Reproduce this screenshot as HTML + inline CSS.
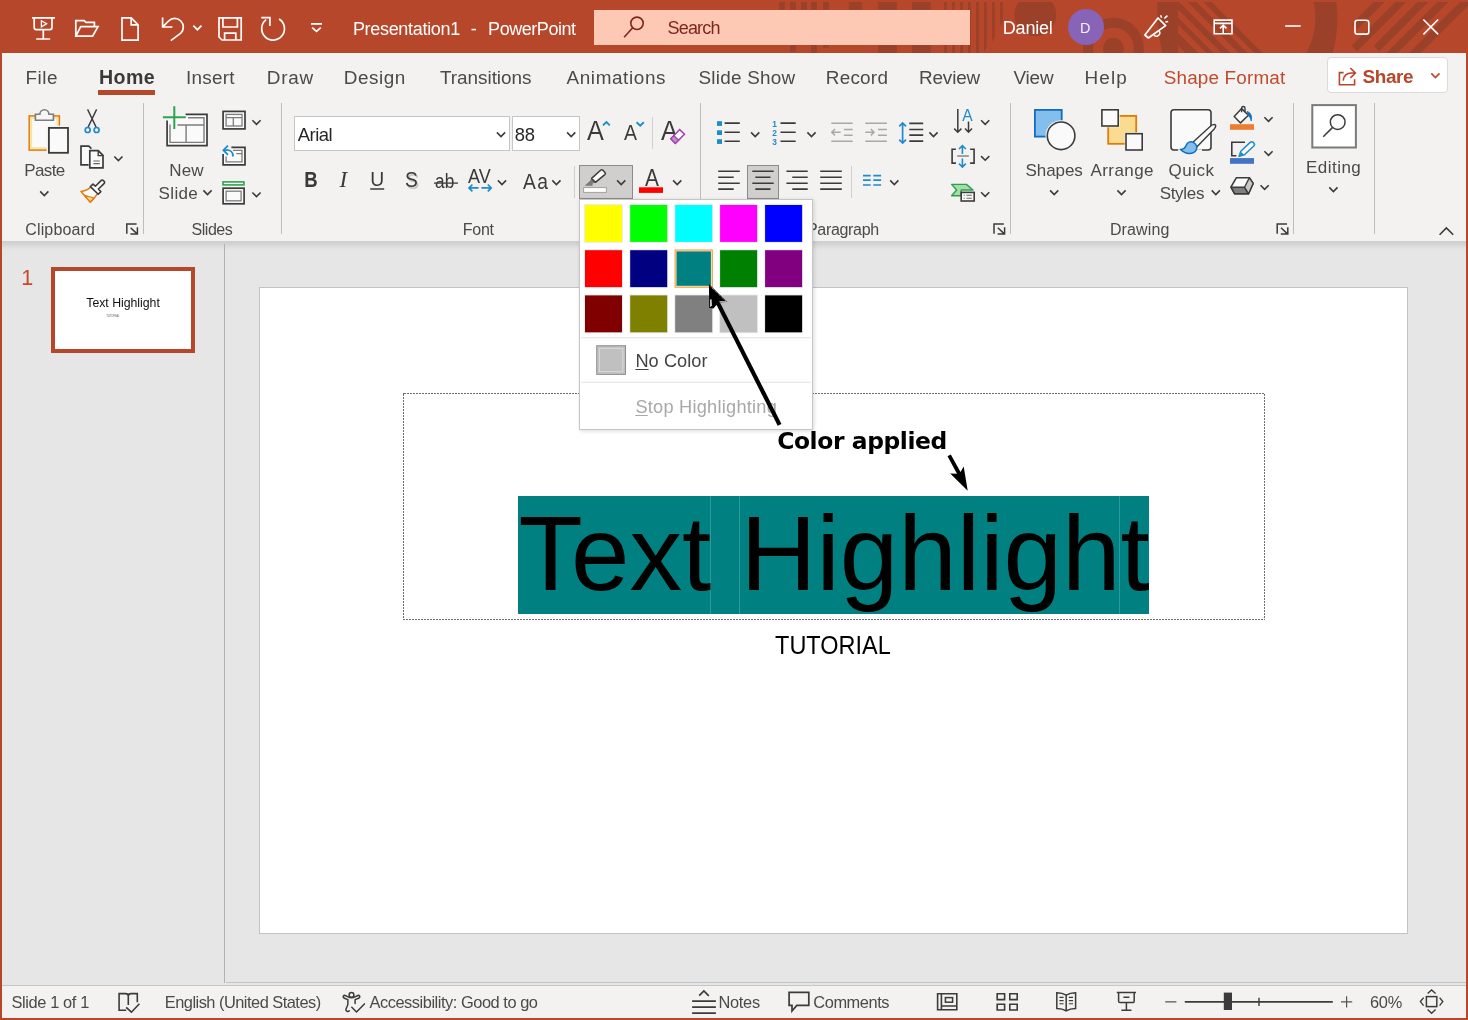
<!DOCTYPE html>
<html lang="en">
<head>
<meta charset="utf-8">
<title>Presentation1 - PowerPoint</title>
<style>
html,body{margin:0;padding:0;background:#e6e6e6;}
body{width:1468px;height:1020px;overflow:hidden;font-family:"Liberation Sans",sans-serif;}
#app{position:relative;width:1468px;height:1020px;overflow:hidden;background:#e6e6e6;}
#app div,#app span,#app svg{position:absolute;box-sizing:border-box;}
.t{white-space:pre;}
#labels,#labels2{left:0;top:0;width:1468px;height:1020px;will-change:transform;}
.t u{text-decoration-thickness:1px;text-underline-offset:2px;}
#titlebar{left:0;top:0;width:1468px;height:53px;background:#b7472a;}
#search{left:594px;top:10px;width:376px;height:35px;background:#fdc9b5;}
#ribbon{left:2px;top:53px;width:1464px;height:188px;background:#f3f2f1;}
#rshadow{left:2px;top:241px;width:1464px;height:9px;background:linear-gradient(#cecece,#d3d3d3 30%,#dddddd 62%,#e6e6e6);}
#bl{left:0;top:53px;width:2px;height:967px;background:#b7472a;}
#br{left:1466px;top:53px;width:2px;height:967px;background:#b7472a;}
#bb{left:0;top:1018px;width:1468px;height:2px;background:#b7472a;}
#status{left:2px;top:985px;width:1464px;height:33px;background:#f3f2f1;border-top:1px solid #c6c6c6;}
#wsline{left:226px;top:982px;width:1240px;height:1px;background:#c4c4c4;}
#pdiv{left:224px;top:244px;width:1px;height:739px;background:#b2b2b2;}
.sep{width:1px;top:103px;height:131px;background:#bdbdbd;}
.ssep{width:1px;height:32px;background:#d2d0ce;}
.box{background:#fff;border:1px solid #c6c6c6;top:116px;height:35px;}
.pressed{background:#d0cfcd;border:1px solid #8c8b89;top:165px;height:34px;}
#share{left:1327px;top:57px;width:121px;height:36px;background:#fff;border:1px solid #dcdad8;border-radius:4px;}
#homeul{left:98px;top:90px;width:57px;height:5px;background:#b7472a;}
#avatar{left:1068px;top:9px;width:36px;height:36px;border-radius:50%;background:#8764b8;}
#slide{left:259px;top:287px;width:1149px;height:647px;background:#fff;border:1px solid #c3c3c3;}
#thumb{left:51px;top:267px;width:144px;height:86px;background:#fff;border:4px solid #b7472a;}
#hl{left:518px;top:496px;width:631px;height:118px;background:#008080;}
.seam{top:496px;width:1px;height:118px;background:#2f9a9a;}
#dd{left:579px;top:199px;width:234px;height:231px;background:#fff;border:1px solid #c6c6c6;box-shadow:1px 1px 4px rgba(0,0,0,.15);}
.sw{width:38px;height:38px;border:1px solid #e3e3e3;}
.ddsep{left:581px;width:230px;height:1px;background:#e1e1e1;}
</style>
</head>
<body>
<div id="app">
<div id="titlebar"></div>
<svg id="pattern" width="1468" height="53" viewBox="0 0 1468 53" style="left:0;top:0">
<defs><clipPath id="pc"><rect x="0" y="2" width="1468" height="51"/></clipPath></defs>
<g fill="#9b4129" clip-path="url(#pc)">
<rect x="779.2" y="2" width="5.8" height="12"/><rect x="790" y="2" width="6" height="50"/><rect x="801.1" y="2" width="5.8" height="12"/>
<rect x="811" y="2" width="5.9" height="51"/><rect x="823" y="2" width="6" height="45.8"/>
<rect x="848.9" y="2" width="13.1" height="10"/>
<rect x="878.1" y="2" width="18.8" height="51"/><rect x="912" y="2" width="18.8" height="51"/>
<rect x="944.1" y="2" width="2.8" height="51"/><rect x="952.1" y="2" width="2.8" height="51"/><rect x="960.2" y="2" width="2.8" height="51"/>
<rect x="968" y="2" width="2.8" height="51"/><rect x="976.1" y="2" width="2.8" height="51"/>
<path d="M984 2h2.8v45l-2.8 4.8z"/><path d="M992 2h2.8v35.4l-2.8 4.6z"/><path d="M1000.1 2h2.8v20l-2.8 4.6z"/>
<circle cx="1035.3" cy="15" r="21"/>
<circle cx="1113.4" cy="48.2" r="10.4"/>
<path d="M1157.2 2H1178.1V53H1162.2C1158.4 36 1156.8 19 1157.2 2Z"/>
<path d="M1178.1 2H1179.2L1230.2 53H1221.6L1178.1 9.5Z"/>
<path d="M1178.1 17.6L1213.5 53H1206.4L1178.1 24.7Z"/>
<path d="M1178.1 32.9L1198.2 53H1185.4L1178.1 45.8Z"/>
<path d="M1187.8 2H1196.4L1247.4 53H1238.8Z"/>
<path d="M1203.5 2H1211.6L1262.6 53H1254.5Z"/>
<path d="M1313.6 2H1336.3C1338.6 19 1337.4 36 1332.5 53H1306.3C1315.2 37 1317.2 20 1313.6 2Z"/>
<path d="M1373.6 2H1384.5L1357.25 29.55 1351.8 24.1Z"/>
<path d="M1395.5 2H1406.4L1357.2 51.2 1351.8 45.8Z"/>
<path d="M1417.4 2H1428.3L1379.2 51.2 1373.8 45.8Z"/>
<path d="M1437.5 2H1448.4L1397.4 53H1386.5Z"/>
<path d="M1460 2H1468V6L1420.5 53H1409Z"/>
</g>
<circle cx="1113.4" cy="48.2" r="25.4" fill="none" stroke="#9b4129" stroke-width="10" clip-path="url(#pc)"/>
</svg>
<div id="search"></div>
<div id="avatar"></div>
<div id="ribbon"></div>
<div id="rshadow"></div>
<div id="pdiv"></div>
<div id="wsline"></div>
<div id="status"></div>
<div id="homeul"></div>
<div id="share"></div>
<div class="sep" style="left:143px"></div>
<div class="sep" style="left:281px"></div>
<div class="sep" style="left:700px"></div>
<div class="sep" style="left:1010px"></div>
<div class="sep" style="left:1293px"></div>
<div class="sep" style="left:1374px"></div>
<div class="ssep" style="left:652px;top:117px"></div>
<div class="ssep" style="left:574px;top:166px"></div>
<div class="ssep" style="left:851px;top:166px"></div>
<div class="box" style="left:294px;width:216px"></div>
<div class="box" style="left:512px;width:68px"></div>
<div class="pressed" style="left:579px;width:54px"></div>
<div class="pressed" style="left:747px;width:32px"></div>
<div id="bl"></div>
<div id="br"></div>
<div id="bb"></div>
<div id="slide"></div>
<div id="thumb"></div>
<svg id="tbox" width="1468" height="1020" viewBox="0 0 1468 1020" style="left:0;top:0" shape-rendering="crispEdges"><rect x="403.5" y="393.5" width="861" height="226" fill="none" stroke="#6f6f6f" stroke-width="1" stroke-dasharray="2 1"/></svg>
<div id="hl"></div>
<div class="seam" style="left:710px"></div>
<div class="seam" style="left:739px"></div>
<div class="seam" style="left:1119px"></div>
<div id="labels">
<span class="t" style="left:352.90px;top:20px;font-size:18px;line-height:18px;height:18px;letter-spacing:-0.308px;color:#ffffff;">Presentation1</span>
<span class="t" style="left:470.70px;top:20px;font-size:18px;line-height:18px;height:18px;color:#ffffff;">-</span>
<span class="t" style="left:488.10px;top:20px;font-size:18px;line-height:18px;height:18px;letter-spacing:-0.456px;color:#ffffff;">PowerPoint</span>
<span class="t" style="left:667.50px;top:19px;font-size:18px;line-height:18px;height:18px;letter-spacing:-0.820px;color:#7f2620;">Search</span>
<span class="t" style="left:1002.80px;top:19px;font-size:18px;line-height:18px;height:18px;letter-spacing:-0.200px;color:#ffffff;">Daniel</span>
<span class="t" style="left:1079.90px;top:20px;font-size:15.2px;line-height:15.2px;height:15.2px;color:#f4f0fa;transform:scaleX(0.95);transform-origin:1px 50%;">D</span>
<span class="t" style="left:25.50px;top:69px;font-size:18.9px;line-height:18.9px;height:18.9px;letter-spacing:0.500px;color:#4a4a4a;">File</span>
<span class="t" style="left:99.00px;top:68px;font-size:19.6px;line-height:19.6px;height:19.6px;letter-spacing:0.417px;font-weight:700;color:#3a3a3a;">Home</span>
<span class="t" style="left:186.00px;top:69px;font-size:18.9px;line-height:18.9px;height:18.9px;letter-spacing:0.250px;color:#4a4a4a;">Insert</span>
<span class="t" style="left:266.75px;top:69px;font-size:18.9px;line-height:18.9px;height:18.9px;letter-spacing:0.750px;color:#4a4a4a;">Draw</span>
<span class="t" style="left:343.75px;top:69px;font-size:18.9px;line-height:18.9px;height:18.9px;letter-spacing:0.550px;color:#4a4a4a;">Design</span>
<span class="t" style="left:440.00px;top:69px;font-size:18.9px;line-height:18.9px;height:18.9px;letter-spacing:-0.025px;color:#4a4a4a;">Transitions</span>
<span class="t" style="left:566.50px;top:69px;font-size:18.9px;line-height:18.9px;height:18.9px;letter-spacing:0.611px;color:#4a4a4a;">Animations</span>
<span class="t" style="left:698.50px;top:69px;font-size:18.9px;line-height:18.9px;height:18.9px;letter-spacing:0.250px;color:#4a4a4a;">Slide Show</span>
<span class="t" style="left:825.75px;top:69px;font-size:18.9px;line-height:18.9px;height:18.9px;letter-spacing:0.250px;color:#4a4a4a;">Record</span>
<span class="t" style="left:919.00px;top:69px;font-size:18.9px;line-height:18.9px;height:18.9px;letter-spacing:-0.150px;color:#4a4a4a;">Review</span>
<span class="t" style="left:1013.50px;top:69px;font-size:18.9px;line-height:18.9px;height:18.9px;letter-spacing:-0.167px;color:#4a4a4a;">View</span>
<span class="t" style="left:1084.50px;top:69px;font-size:18.9px;line-height:18.9px;height:18.9px;letter-spacing:1.167px;color:#4a4a4a;">Help</span>
<span class="t" style="left:1163.75px;top:69px;font-size:18.9px;line-height:18.9px;height:18.9px;letter-spacing:0.159px;color:#bf4b2e;">Shape Format</span>
<span class="t" style="left:1362.50px;top:68px;font-size:18.9px;line-height:18.9px;height:18.9px;letter-spacing:-0.375px;font-weight:700;color:#b7472a;">Share</span>
<span class="t" style="left:24.30px;top:162px;font-size:17.0px;line-height:17.0px;height:17.0px;letter-spacing:-0.625px;color:#4a4a4a;">Paste</span>
<span class="t" style="left:169.30px;top:162px;font-size:17.0px;line-height:17.0px;height:17.0px;letter-spacing:0.100px;color:#4a4a4a;">New</span>
<span class="t" style="left:158.60px;top:185px;font-size:17.0px;line-height:17.0px;height:17.0px;letter-spacing:0.350px;color:#4a4a4a;">Slide</span>
<span class="t" style="left:1025.50px;top:162px;font-size:17.0px;line-height:17.0px;height:17.0px;letter-spacing:-0.060px;color:#4a4a4a;">Shapes</span>
<span class="t" style="left:1090.50px;top:162px;font-size:17.0px;line-height:17.0px;height:17.0px;letter-spacing:0.417px;color:#4a4a4a;">Arrange</span>
<span class="t" style="left:1168.60px;top:162px;font-size:17.0px;line-height:17.0px;height:17.0px;letter-spacing:0.500px;color:#4a4a4a;">Quick</span>
<span class="t" style="left:1159.70px;top:185px;font-size:17.0px;line-height:17.0px;height:17.0px;letter-spacing:-0.320px;color:#4a4a4a;">Styles</span>
<span class="t" style="left:1306.00px;top:159px;font-size:17.0px;line-height:17.0px;height:17.0px;letter-spacing:0.467px;color:#4a4a4a;">Editing</span>
<span class="t" style="left:297.80px;top:126px;font-size:18.4px;line-height:18.4px;height:18.4px;letter-spacing:-0.500px;color:#262626;">Arial</span>
<span class="t" style="left:514.80px;top:126px;font-size:18.4px;line-height:18.4px;height:18.4px;letter-spacing:-0.200px;color:#262626;">88</span>
<span class="t" style="left:25.30px;top:222px;font-size:16.0px;line-height:16.0px;height:16.0px;letter-spacing:0.138px;color:#4a4a4a;">Clipboard</span>
<span class="t" style="left:191.60px;top:222px;font-size:16.0px;line-height:16.0px;height:16.0px;letter-spacing:-0.500px;color:#4a4a4a;">Slides</span>
<span class="t" style="left:462.70px;top:222px;font-size:16.0px;line-height:16.0px;height:16.0px;letter-spacing:-0.233px;color:#4a4a4a;">Font</span>
<span class="t" style="left:807.00px;top:222px;font-size:16.0px;line-height:16.0px;height:16.0px;letter-spacing:-0.325px;color:#4a4a4a;">Paragraph</span>
<span class="t" style="left:1109.90px;top:222px;font-size:16.0px;line-height:16.0px;height:16.0px;letter-spacing:0.150px;color:#4a4a4a;">Drawing</span>
<span class="t" style="left:304.00px;top:169px;font-size:21.6px;line-height:21.6px;height:21.6px;font-weight:700;color:#3a3a3a;transform:scaleX(0.86);transform-origin:1px 50%;">B</span>
<span class="t" style="left:339.40px;top:168px;font-size:23px;line-height:23px;height:23px;font-style:italic;color:#3a3a3a;font-family:'Liberation Serif', serif;">I</span>
<span class="t" style="left:369.90px;top:168px;font-size:21px;line-height:21px;height:21px;color:#3a3a3a;transform:scaleX(0.92);transform-origin:2px 50%;">U</span>
<span class="t" style="left:405.00px;top:170px;font-size:21.4px;line-height:21.4px;height:21.4px;color:#3a3a3a;transform:scaleX(0.9);transform-origin:1px 50%;text-shadow:1.6px 1.6px 0 #c6c6c6;">S</span>
<span class="t" style="left:435.40px;top:172px;font-size:19.6px;line-height:19.6px;height:19.6px;color:#3a3a3a;transform:scaleX(0.88);transform-origin:1px 50%;">ab</span>
<span class="t" style="left:468.40px;top:166px;font-size:20px;line-height:20px;height:20px;color:#3a3a3a;transform:scaleX(0.9);transform-origin:0px 50%;">AV</span>
<span class="t" style="left:522.60px;top:172px;font-size:21.4px;line-height:21.4px;height:21.4px;color:#3a3a3a;transform:scaleX(0.9);transform-origin:0px 50%;letter-spacing:1.6px;">Aa</span>
<span class="t" style="left:587.30px;top:117px;font-size:28px;line-height:28px;height:28px;color:#3a3a3a;transform:scaleX(0.9);transform-origin:0px 50%;">A</span>
<span class="t" style="left:624.20px;top:122px;font-size:21.7px;line-height:21.7px;height:21.7px;color:#3a3a3a;transform:scaleX(0.9);transform-origin:0px 50%;">A</span>
<span class="t" style="left:661.30px;top:117px;font-size:28px;line-height:28px;height:28px;color:#3a3a3a;transform:scaleX(0.9);transform-origin:0px 50%;">A</span>
<span class="t" style="left:644.60px;top:166px;font-size:23.8px;line-height:23.8px;height:23.8px;color:#3a3a3a;transform:scaleX(0.88);transform-origin:0px 50%;">A</span>
<span class="t" style="left:11.50px;top:994px;font-size:16.4px;line-height:16.4px;height:16.4px;letter-spacing:-0.382px;color:#4a4a4a;">Slide 1 of 1</span>
<span class="t" style="left:164.80px;top:994px;font-size:16.4px;line-height:16.4px;height:16.4px;letter-spacing:-0.514px;color:#4a4a4a;">English (United States)</span>
<span class="t" style="left:369.50px;top:994px;font-size:16.4px;line-height:16.4px;height:16.4px;letter-spacing:-0.458px;color:#4a4a4a;">Accessibility: Good to go</span>
<span class="t" style="left:718.50px;top:994px;font-size:16.4px;line-height:16.4px;height:16.4px;letter-spacing:-0.300px;color:#4a4a4a;">Notes</span>
<span class="t" style="left:813.30px;top:994px;font-size:16.4px;line-height:16.4px;height:16.4px;letter-spacing:-0.429px;color:#4a4a4a;">Comments</span>
<span class="t" style="left:1370.00px;top:994px;font-size:16.4px;line-height:16.4px;height:16.4px;letter-spacing:-0.300px;color:#4a4a4a;">60%</span>
<span class="t" style="left:21.30px;top:268px;font-size:21.5px;line-height:21.5px;height:21.5px;color:#c9482b;clip-path:polygon(0 0,100% 0,100% 84%,72% 84%,72% 100%,30% 100%,30% 84%,0 84%);">1</span>
<span class="t" style="left:86.30px;top:297px;font-size:12.3px;line-height:12.3px;height:12.3px;letter-spacing:-0.023px;color:#111;">Text Highlight</span>
<span class="t" style="left:106.20px;top:316px;font-size:2.7px;line-height:2.7px;height:2.7px;color:#555;">TUTORIAL</span>
<span class="t" style="left:518.40px;top:501px;font-size:105.2px;line-height:105.2px;height:105.2px;color:#000;">Text Highlight</span>
<span class="t" style="left:774.60px;top:633px;font-size:25.2px;line-height:25.2px;height:25.2px;color:#000;transform:scaleX(0.932);transform-origin:1px 50%;">TUTORIAL</span>
</div>
<svg id="ic-title" width="1468" height="53" viewBox="0 0 1468 53" style="left:0;top:0" fill="none" stroke="#fff" stroke-width="1.7">
<!-- presentation -->
<path d="M32 17.9h23M34.2 18v9.6a2 2 0 0 0 2 2h13.8a2 2 0 0 0 2-2V18M43.3 29.8v9M36.2 39h14"/>
<path d="M41.4 20.8l5.2 3-5.2 3.1z" stroke-width="1.3"/>
<!-- folder -->
<path d="M75.8 36.2V20.7h8.4l1.8 1.7h8.4v4M75.9 36.2l4.8-9.6H98l-5.4 9.6z" stroke-linejoin="miter"/>
<!-- new doc -->
<path d="M131.2 17.9H122V40.1h16.1V24.8zM131.2 17.9v6.9h6.9"/>
<!-- undo -->
<path d="M162.6 17.4V27h9.8M163 26.6l5.6-5.6a8.6 8.6 0 0 1 12.2 0 8.6 8.6 0 0 1 0 12.2L170.8 40.6"/>
<path d="M193.3 25.6l4.1 4.1 4.1-4.1"/>
<!-- save -->
<path d="M219 17.8h22.2V40H222l-3-3zM222.9 17.8v9.2h14.5v-9.2M224.6 40v-6.9h11.2V40"/>
<!-- redo -->
<path d="M261.3 17.6h8.6v8.5M266.2 19.6a11.4 11.4 0 1 0 12.9-.6"/>
<!-- customize -->
<path d="M311 23.9h11M312.2 27.6l4.3 3.8 4.3-3.8"/>
<!-- search icon -->
<g stroke="#7f2620" stroke-width="1.6"><circle cx="637" cy="23.3" r="6.2"/><path d="M632.7 27.8l-8.6 9.4"/></g>
<!-- megaphone -->
<path d="M1144.9 35l13.1-17 7.6 7.6-17.2 12.4z" stroke-linejoin="round"/>
<path d="M1153.6 34.6a3 3 0 0 0 5.6-3.6" stroke-width="1.5"/>
<path d="M1160.6 15.2l1 2.6M1167.4 15.6l-3 2.8M1168.2 21.4l-2.8 .7" stroke-width="1.5"/>
<!-- ribbon display -->
<path d="M1214.2 20.1h17.8v13.6h-17.8zM1214.2 23.4h17.8M1223.2 33v-7.2M1220 28.4l3.2-3.1 3.2 3.1" stroke-width="1.6"/>
<!-- min / max / close -->
<path d="M1285.2 26h15.5" stroke-width="1.6"/>
<rect x="1355" y="20.2" width="13.8" height="13.9" rx="2.4" stroke-width="1.6"/>
<path d="M1423.4 19.5l14.8 14.9M1438.2 19.5l-14.8 14.9" stroke-width="1.6"/>
</svg>
<svg id="ic-rib" width="1468" height="260" viewBox="0 0 1468 260" style="left:0;top:0" fill="none" stroke="#3b3b3b" stroke-width="1.7">
<!-- chevrons -->
<g stroke="#3b3b3b">
<path d="M-4.1 -2.1L0 2L4.1 -2.1" transform="translate(44.3 193.5)" fill="none" stroke-width="1.6"/><path d="M-4.1 -2.1L0 2L4.1 -2.1" transform="translate(118.4 158.6)" fill="none" stroke-width="1.6"/><path d="M-4.1 -2.1L0 2L4.1 -2.1" transform="translate(207.5 192.5)" fill="none" stroke-width="1.6"/>
<path d="M-4.1 -2.1L0 2L4.1 -2.1" transform="translate(256.5 122.4)" fill="none" stroke-width="1.6"/><path d="M-4.1 -2.1L0 2L4.1 -2.1" transform="translate(256.5 194.6)" fill="none" stroke-width="1.6"/><path d="M-4.1 -2.1L0 2L4.1 -2.1" transform="translate(501 134.5)" fill="none" stroke-width="1.6"/>
<path d="M-4.1 -2.1L0 2L4.1 -2.1" transform="translate(571.2 134.5)" fill="none" stroke-width="1.6"/><path d="M-4.1 -2.1L0 2L4.1 -2.1" transform="translate(502 182.5)" fill="none" stroke-width="1.6"/><path d="M-4.1 -2.1L0 2L4.1 -2.1" transform="translate(556.4 182.5)" fill="none" stroke-width="1.6"/>
<path d="M-4.1 -2.1L0 2L4.1 -2.1" transform="translate(621.2 182.5)" fill="none" stroke-width="1.6"/><path d="M-4.1 -2.1L0 2L4.1 -2.1" transform="translate(677.2 182.5)" fill="none" stroke-width="1.6"/><path d="M-4.1 -2.1L0 2L4.1 -2.1" transform="translate(755.2 134.5)" fill="none" stroke-width="1.6"/>
<path d="M-4.1 -2.1L0 2L4.1 -2.1" transform="translate(811.5 134.5)" fill="none" stroke-width="1.6"/><path d="M-4.1 -2.1L0 2L4.1 -2.1" transform="translate(933.5 134.5)" fill="none" stroke-width="1.6"/><path d="M-4.1 -2.1L0 2L4.1 -2.1" transform="translate(985.2 122.4)" fill="none" stroke-width="1.6"/>
<path d="M-4.1 -2.1L0 2L4.1 -2.1" transform="translate(985.2 158.2)" fill="none" stroke-width="1.6"/><path d="M-4.1 -2.1L0 2L4.1 -2.1" transform="translate(985.2 194.3)" fill="none" stroke-width="1.6"/><path d="M-4.1 -2.1L0 2L4.1 -2.1" transform="translate(894.3 182.5)" fill="none" stroke-width="1.6"/>
<path d="M-4.1 -2.1L0 2L4.1 -2.1" transform="translate(1054.2 192.5)" fill="none" stroke-width="1.6"/><path d="M-4.1 -2.1L0 2L4.1 -2.1" transform="translate(1121.5 192.5)" fill="none" stroke-width="1.6"/><path d="M-4.1 -2.1L0 2L4.1 -2.1" transform="translate(1215.8 192.5)" fill="none" stroke-width="1.6"/>
<path d="M-4.1 -2.1L0 2L4.1 -2.1" transform="translate(1268.5 119.4)" fill="none" stroke-width="1.6"/><path d="M-4.1 -2.1L0 2L4.1 -2.1" transform="translate(1268.5 153.4)" fill="none" stroke-width="1.6"/><path d="M-4.1 -2.1L0 2L4.1 -2.1" transform="translate(1264.6 187.4)" fill="none" stroke-width="1.6"/>
<path d="M-4.1 -2.1L0 2L4.1 -2.1" transform="translate(1333.4 189.5)" fill="none" stroke-width="1.6"/>
</g>
<path d="M-4.1 -2.1L0 2L4.1 -2.1" transform="translate(1435.4 75.5)" fill="none" stroke-width="1.6" stroke="#b7472a"/>
<!-- dialog launchers -->
<path d="M1 11V1.1H10.8M4.8 5l6.8 6.3M11.6 4.4v6.9H4.6" transform="translate(125.8 222.8)" fill="none" stroke-width="1.5"/><path d="M1 11V1.1H10.8M4.8 5l6.8 6.3M11.6 4.4v6.9H4.6" transform="translate(993 222.8)" fill="none" stroke-width="1.5"/><path d="M1 11V1.1H10.8M4.8 5l6.8 6.3M11.6 4.4v6.9H4.6" transform="translate(1276.2 222.8)" fill="none" stroke-width="1.5"/>
<!-- collapse ribbon -->
<path d="M1439.6 234.8l6.8-6.8 6.8 6.8" stroke-width="1.6"/>
<!-- share icon -->
<g stroke="#b7472a" stroke-width="1.6"><path d="M1343.6 72.6h-4.2v12.2h15.2v-5.6M1343.2 80.6c.6-5 4-7.6 8.4-7.6h3M1350.4 68.2l5 4.8-5 4.8"/></g>

<!-- ===== Clipboard ===== -->
<rect x="31" y="117.7" width="26.6" height="30.6" fill="#fafafa" stroke="#fbe3a6" stroke-width="2.4"/>
<rect x="29.2" y="115.9" width="30.2" height="34.2" stroke="#e07b0c" stroke-width="1.5" fill="none"/>
<path d="M35.4 114.2h4.5a4.5 4.5 0 0 1 9 0h4.5v6h-18z" fill="#f6f6f6" stroke="#7d7d7d" stroke-width="1.6"/>
<rect x="46.6" y="125.6" width="23.6" height="29.4" fill="#f3f2f1" stroke="none"/><rect x="48.9" y="127.9" width="19.1" height="24.9" fill="#fafafa" stroke="#3b3b3b" stroke-width="1.8"/>
<!-- scissors -->
<path d="M87.6 109.4l8.6 18M96.6 109.4l-8.6 18" stroke-width="1.4"/>
<circle cx="87.7" cy="130" r="2.5" stroke="#1e8bcd" stroke-width="1.7"/><circle cx="96.6" cy="130" r="2.5" stroke="#1e8bcd" stroke-width="1.7"/>
<!-- copy -->
<path d="M88.6 164.8H81v-18.7h7.8l2.6 2.6" fill="#fafafa"/>
<path d="M89.8 150.6h8.4l4.8 4.8v12.5H89.8z" fill="#fafafa"/>
<path d="M98.2 150.8v4.8h4.8" stroke-width="1.4"/>
<path d="M93.4 161h6.4M93.4 163.6h6.4" stroke-width="1.2" stroke="#666"/>
<!-- format painter -->
<path d="M81 191.4c4.6-.6 8.4-2.6 10.6-5.4l6.8 6.6c-2.4 3.4-5 6.8-8 9.6z" fill="#fafafa" stroke="#e07b0c" stroke-width="1.5" stroke-linejoin="round"/>
<path d="M84.4 195.4l9.6 2.6-3.8 4z" fill="#fbd98f" stroke="#e07b0c" stroke-width="1.2" stroke-linejoin="round"/>
<path d="M90.4 186.6l2.6-2.6 2.4 2.2 5.6-5.6a1.6 1.6 0 0 1 2.4 0l.6 .6a1.6 1.6 0 0 1 0 2.4l-5.6 5.4 2.4 2.6-2.6 2.6z" fill="#fafafa" stroke="#3b3b3b" stroke-width="1.6" stroke-linejoin="round"/>
</svg>
<svg id="ic-rib2" width="1468" height="260" viewBox="0 0 1468 260" style="left:0;top:0" fill="none" stroke="#3b3b3b" stroke-width="1.7">
<!-- ===== Slides: new slide ===== -->
<path d="M185.6 114.4H207V145.7H167.1V120.5" fill="#fafafa"/>
<path d="M188 117.8h16v24.6h-34v-18" stroke="#7d7d7d" stroke-width="1.4"/>
<path d="M177.4 125h26.6M186.1 125v17.4" stroke="#7d7d7d" stroke-width="1.4"/>
<path d="M174.3 106.3v22.6M162.9 117.3h22.9" stroke="#2ea44f" stroke-width="2"/>
<!-- layout -->
<rect x="223.1" y="111.4" width="21.9" height="17.5" fill="#fafafa" stroke-width="1.7"/>
<rect x="226.1" y="114.4" width="15.9" height="11.6" stroke="#7d7d7d" stroke-width="1.3"/>
<path d="M226.1 117.6h15.9M233.3 117.6v8.4" stroke="#7d7d7d" stroke-width="1.3"/>
<!-- reset -->
<path d="M231.4 147.4H245V164.8H223.1V154" fill="#fafafa" stroke-width="1.7"/>
<path d="M233 150.4h9v11.4h-15.9v-5.4M236.4 153.6h5.4" stroke="#7d7d7d" stroke-width="1.3"/>
<path d="M228 145.6l-4.6 4.6 4.6 4.6M223.8 150.2h3.6c3.4 0 5.6 2.6 5.6 6.2" stroke="#1e8bcd" stroke-width="1.8"/>
<!-- section -->
<rect x="223" y="181.9" width="21" height="3" stroke="#2ea44f" stroke-width="1.6" fill="#fafafa"/>
<rect x="223.1" y="188.2" width="21" height="15.6" fill="#fafafa" stroke-width="1.7"/>
<rect x="226.1" y="191.2" width="15" height="9.6" stroke="#7d7d7d" stroke-width="1.3"/>
<!-- ===== Font ===== -->
<path d="M370.2 189h14" stroke-width="1.5"/>
<path d="M434 183.1h24" stroke-width="1.3"/>
<g stroke="#1e8bcd" stroke-width="1.7">
<path d="M469.2 187.9h9.4M472.4 184.5l-3.4 3.4 3.4 3.4"/>
<path d="M481.4 187.9h9.6M487.8 184.5l3.4 3.4-3.4 3.4"/>
<path d="M603 125.4l3.4-3.4 3.4 3.4" stroke-width="1.9"/>
<path d="M636.6 122.2l3.6 3.4 3.6-3.4" stroke-width="1.9"/>
</g>
<!-- eraser (clear formatting) -->
<path d="M670.8 138.8l8.9-9.2 4.8 4.7-9.2 9.1z" fill="#fafafa" stroke="#a240b4" stroke-width="1.5" stroke-linejoin="miter"/>
<path d="M670.8 138.8l3.2-3.2 4.6 4.6-3.3 3.2z" fill="#c58ad0" stroke="#a240b4" stroke-width="1.3"/>
<!-- highlighter -->
<path d="M591.5 178.5l4 3.9-2.9 1.1v2.2h-8l5-4.5z" fill="#7b7a78" stroke="none"/>
<path d="M591.6 178.4l9-8.2a1.7 1.7 0 0 1 2.3 .1l1.9 1.9a1.7 1.7 0 0 1 0 2.4l-9.4 7.7z" fill="#fafafa" stroke="#3b3b3b" stroke-width="1.5" stroke-linejoin="round"/>
<rect x="583.6" y="187.6" width="22.8" height="4.8" fill="#fff" stroke="#a3a2a0" stroke-width="1"/>
<!-- font colour bar -->
<rect x="639" y="187.3" width="24" height="5.6" fill="#ff0000" stroke="none"/>
</svg>
<svg id="ic-rib3" width="1468" height="260" viewBox="0 0 1468 260" style="left:0;top:0" fill="none" stroke="#3b3b3b" stroke-width="1.7">
<!-- ===== Paragraph ===== -->
<g fill="#1e8bcd" stroke="none">
<rect x="717" y="121.2" width="5" height="4.7"/><rect x="717" y="130.3" width="5" height="4.7"/><rect x="717" y="139.2" width="5" height="4.7"/>
</g>
<path d="M724.6 123.1h15.2M724.6 132.2h15.2M724.6 141.3h15.2" stroke-width="1.6"/>
<path d="M780.5 123.1h15.2M780.5 132.2h15.2M780.5 141.3h15.2" stroke-width="1.6"/>
<g fill="#1e8bcd" stroke="none" font-family="Liberation Sans, sans-serif" font-size="8.4" font-weight="700">
<text x="772.2" y="127.1">1</text><text x="772.2" y="136.2">2</text><text x="772.2" y="145.2">3</text>
</g>
<!-- indent icons (disabled) -->
<g stroke="#a8a8a8" stroke-width="1.5">
<path d="M831.3 123.3h21.4M831.3 141.2h21.4M843.9 129.5h8.8M843.9 135.2h8.8M831.8 132.2h8.8M835 129l-3.2 3.2 3.2 3.2"/>
<path d="M865.3 123.3h21.6M865.3 141.2h21.6M878 129.5h8.9M878 135.2h8.9M865.3 132.2h8.6M870.8 129l3.2 3.2-3.2 3.2"/>
</g>
<!-- line spacing -->
<path d="M909.3 123.3h13.9M909.3 129.5h13.9M909.3 135.2h13.9M909.3 141.2h13.9" stroke-width="1.7"/>
<path d="M902.6 123.2v19.6M899.2 126.4l3.4-3.4 3.4 3.4M899.2 139.6l3.4 3.4 3.4-3.4" stroke="#1e8bcd" stroke-width="1.7"/>
<!-- align buttons -->
<path d="M718.2 171.2h21.6M718.2 177.3h15.5M718.2 183.2h21.6M718.2 189.1h15.5" stroke-width="1.6"/>
<path d="M752.3 171.2h21.4M755.3 177.3h15.2M752.3 183.2h21.4M755.3 189.1h15.2" stroke-width="1.6"/>
<path d="M786.4 171.2h21.3M792.3 177.3h15.4M786.4 183.2h21.3M792.3 189.1h15.4" stroke-width="1.6"/>
<path d="M820.2 171.2h21.6M820.2 177.3h21.6M820.2 183.2h21.6M820.2 189.1h21.6" stroke-width="1.6"/>
<!-- columns -->
<path d="M863 175.7h7.7M863 180.2h7.7M863 185h7.7M873.3 175.7h7.8M873.3 180.2h7.8M873.3 185h7.8" stroke="#1e8bcd" stroke-width="1.7"/>
<!-- text direction -->
<path d="M957.8 109.1v22.7M954.2 128.6l3.6 3.6 3.6-3.6M968.5 121.4v10.4M965 128.6l3.5 3.6 3.5-3.6" stroke-width="1.5"/>
<text x="962.3" y="120.6" font-family="Liberation Sans, sans-serif" font-size="15.6" fill="#1e8bcd" stroke="none">A</text>
<!-- align text -->
<path d="M955.9 149.3h-3.8v13.8h3.8M970.1 149.3h4v13.8h-4" stroke-width="1.6"/>
<path d="M957.2 156h11.6" stroke="#7d7d7d" stroke-width="1.4"/>
<path d="M962.4 145.8v8.2M959 149l3.4-3.4 3.4 3.4M962.4 158.4v8.4M959 163.6l3.4 3.4 3.4-3.4" stroke="#1e8bcd" stroke-width="1.6"/>
<!-- smartart -->
<path d="M951.6 184.4h14.8l6.6 5.6h-11.8l-.2 5.8h-9.4l5-5.8z" fill="#a5dca9" stroke="#2e9e4f" stroke-width="1.4" stroke-linejoin="round"/>
<rect x="961.2" y="192.4" width="13" height="8.6" fill="#fafafa" stroke-width="1.6"/>
<path d="M963.6 195.2h1.2M966.4 195.2h5.4M963.6 198.2h1.2M966.4 198.2h5.4" stroke="#666" stroke-width="1.1"/>
</svg>
<svg id="ic-rib4" width="1468" height="260" viewBox="0 0 1468 260" style="left:0;top:0" fill="none" stroke="#3b3b3b" stroke-width="1.7">
<!-- ===== Drawing: shapes ===== -->
<rect x="1034.9" y="109.9" width="26.8" height="26.7" fill="#83beec" stroke="#106ebe" stroke-width="1.8"/>
<circle cx="1061.1" cy="135.8" r="15.6" fill="#f3f2f1" stroke="none"/>
<circle cx="1061.1" cy="135.8" r="13.8" fill="#fafafa" stroke="#3b3b3b" stroke-width="1.6"/>
<!-- arrange -->
<rect x="1108.2" y="115.9" width="28" height="27.9" fill="#f9dc8f" stroke="#e07b0c" stroke-width="1.8"/>
<rect x="1100.6" y="108.5" width="19" height="18.8" fill="#f3f2f1" stroke="none"/>
<rect x="1124.7" y="132.4" width="19" height="19" fill="#f3f2f1" stroke="none"/>
<rect x="1101.9" y="109.8" width="16.3" height="16.2" fill="#fafafa" stroke-width="1.6"/>
<rect x="1126" y="133.7" width="16.2" height="16.3" fill="#fafafa" stroke-width="1.6"/>
<!-- quick styles -->
<rect x="1171" y="109.8" width="40" height="40.2" rx="3" fill="#fafafa" stroke-width="1.6"/>
<path d="M1178 150.8h24" stroke="#f3f2f1" stroke-width="3"/>
<path d="M1192.6 142.6L1211 125.8c1.6-1.4 3.8-1.6 4.4-.8 .6 .8 0 2.6-1.4 4.2L1197 146.8z" fill="#fafafa" stroke="#3b3b3b" stroke-width="1.4" stroke-linejoin="round"/>
<path d="M1180.6 149.4c3.2-.2 4.8-2 5.6-4.2 1.2-3 4.4-4.2 7.2-2.8 3.2 1.6 4.4 5.2 2.6 8-2.8 4.4-10.4 4.2-15.4-1z" fill="#83beec" stroke="#106ebe" stroke-width="1.5" stroke-linejoin="round"/>
<!-- shape fill -->
<path d="M1234.2 116.4l7.4-7.8 6.8 6.7-7.9 7.6z" fill="#fafafa" stroke-width="1.5" stroke-linejoin="round"/>
<path d="M1241.6 112.2v-4a1.7 1.7 0 0 1 3.4 0v3.6" stroke-width="1.4"/>
<path d="M1247.2 111.4c3.6 1.2 5.2 4.8 4 9.6-.5-2.7-1.5-4.4-3.2-5.6z" fill="#106ebe" stroke="#106ebe" stroke-width="0.8" stroke-linejoin="round"/>
<rect x="1230" y="124.2" width="24" height="5.6" fill="#ed7d31" stroke="none"/>
<!-- shape outline -->
<path d="M1245 142.2h-13.2v13.6h4.6" stroke-width="1.6"/>
<path d="M1239 156.4l1.8-5.2 9.4-8.8a2.2 2.2 0 0 1 3 0l.6 .6a2.2 2.2 0 0 1 0 3l-9.4 8.8z" fill="#fafafa" stroke="#1e8bcd" stroke-width="1.5" stroke-linejoin="round"/>
<path d="M1239 156.4l1.6-4.8 3.4 3.2z" fill="#1e8bcd" stroke="none"/>
<rect x="1230" y="158.1" width="24" height="5.7" fill="#4472c4" stroke="none"/>
<!-- shape effects -->
<path d="M1236.3 177.8h13l3.8 5.6-4.6 10.4h-13.8l-3.8-6.6z" fill="#fafafa" stroke-width="1.6" stroke-linejoin="round"/>
<path d="M1231.1 187.2h13.4l4 6.6h-13.8z" fill="#7f7f7f" stroke="#3b3b3b" stroke-width="1.4" stroke-linejoin="round"/>
<path d="M1249.4 177.8l3.8 5.6-4.6 10.4-4.1-6.6z" fill="#c8c8c8" stroke="#3b3b3b" stroke-width="1.4" stroke-linejoin="round"/>
<!-- ===== Editing ===== -->
<rect x="1312.3" y="105.1" width="43.6" height="42.4" fill="#fff" stroke="#7a7a7a" stroke-width="2"/>
<circle cx="1337.7" cy="122.1" r="7.4" fill="#fafafa" stroke-width="1.5"/>
<path d="M1332.4 127.6l-9.2 9.2" stroke-width="1.5"/>
</svg>
<svg id="ic-status" width="1468" height="40" viewBox="0 980 1468 40" style="left:0;top:980px" fill="none" stroke="#3b3b3b" stroke-width="1.5">
<!-- spelling -->
<path d="M126.2 1010.2H119.1V993.6h6.5c1.8 0 2.7 1 2.7 2.4v9M128.3 996c0-1.4 .9-2.4 2.7-2.4h6.3v8.6M126.2 1007.3l5.2 4.9 8-8.4" stroke-width="1.6"/>
<!-- accessibility -->
<circle cx="351.5" cy="994.9" r="2.4" stroke-width="1.5"/>
<path d="M344.6 995.2c-1.7 .2-2 2.3-.2 3l3.5 1.4v3.8c0 2.4-1.8 4.2-2.0 6.2-.1 1.6 1.8 2.4 3.4 1.3M344.6 995.2c2.4 .9 4.5 2.6 6.9 2.6s4.5-1.7 6.9-2.6c1.7 .2 2 2.3 .2 3l-3.5 1.4v4.0M351.8 1007.2l4.7 4.8 7.9-8.1" stroke-width="1.5" stroke-linejoin="round" stroke-linecap="round"/>
<!-- notes -->
<path d="M692.1 1001.1h23.8M692.1 1007.2h23.8M692.1 1013.2h23.8M699.2 995.7l4.7-4.7 4.9 4.8" stroke-width="1.7"/>
<!-- comments -->
<path d="M789.1 992.3h19.7v13.1h-12l-4.8 5.6v-5.6h-2.9z" stroke-width="1.7" stroke-linejoin="miter"/>
<!-- normal view -->
<path d="M937.6 993.8h19.2v16h-19.2zM941.4 993.8v16M941.4 1006h15.4" stroke-width="1.6"/>
<rect x="945.4" y="997.6" width="7.2" height="4.6" stroke-width="1.5"/>
<!-- sorter -->
<path d="M997.2 993.8h7.4v5.8h-7.4zM1009.8 993.8h7.4v5.8h-7.4zM997.2 1004.2h7.4v5.8h-7.4zM1009.8 1004.2h7.4v5.8h-7.4z" stroke-width="1.6"/>
<!-- reading view -->
<path d="M1066.2 995.2c-2.8-1.8-6-2.4-9.4-2.4v15.6c3.4 0 6.6 .6 9.4 2.4 2.8-1.8 6-2.4 9.4-2.4V992.8c-3.4 0-6.6 .6-9.4 2.4zM1066.2 995.2v15.6" stroke-width="1.5"/>
<path d="M1059.4 997.4h4.2M1059.4 1000.6h4.2M1059.4 1003.8h4.2M1068.8 997.4h4.2M1068.8 1000.6h4.2M1068.8 1003.8h4.2" stroke-width="1.1"/>
<!-- slideshow -->
<path d="M1116.8 992.6h19.2M1118.6 992.8v8.4a1.4 1.4 0 0 0 1.4 1.4h12.8a1.4 1.4 0 0 0 1.4-1.4v-8.4M1126.4 1002.6v7.4M1121.4 1010.2h10M1123.4 997.2h6" stroke-width="1.5"/>
<!-- zoom -->
<path d="M1165.2 1001.8h11.2M1341 1001.8h11.2M1346.6 996.2v11.2" stroke-width="1.2" stroke="#555"/>
<path d="M1184.8 1001.8h148" stroke-width="1.8"/>
<path d="M1259 997.8v8.2" stroke-width="1.4"/>
<rect x="1223.8" y="992.6" width="8.2" height="17.4" fill="#3b3b3b" stroke="none"/>
<!-- fit -->
<rect x="1426.4" y="996.6" width="10.4" height="10" stroke-width="1.5"/>
<path d="M1427.6 993.6l4-3.6 4 3.6M1427.6 1009.6l4 3.6 4-3.6M1423.6 997.6l-3.2 4 3.2 4M1439.6 997.6l3.2 4-3.2 4" stroke-width="1.4"/>
</svg>
<div id="dd"></div>
<svg id="swatches" width="1468" height="460" viewBox="0 0 1468 460" style="left:0;top:0">
<rect x="584.1" y="204.1" width="38.8" height="38.7" fill="#e9e9ee"/>
<rect x="585.0" y="205.0" width="37" height="36.9" fill="#ffff00"/>
<rect x="629.3" y="204.1" width="38.8" height="38.7" fill="#e9e9ee"/>
<rect x="630.2" y="205.0" width="37" height="36.9" fill="#00ff00"/>
<rect x="674.3" y="204.1" width="38.8" height="38.7" fill="#e9e9ee"/>
<rect x="675.2" y="205.0" width="37" height="36.9" fill="#00ffff"/>
<rect x="719.2" y="204.1" width="38.8" height="38.7" fill="#e9e9ee"/>
<rect x="720.1" y="205.0" width="37" height="36.9" fill="#ff00ff"/>
<rect x="764.2" y="204.1" width="38.8" height="38.7" fill="#e9e9ee"/>
<rect x="765.1" y="205.0" width="37" height="36.9" fill="#0000ff"/>
<rect x="584.1" y="249.3" width="38.8" height="38.7" fill="#e9e9ee"/>
<rect x="585.0" y="250.2" width="37" height="36.9" fill="#ff0000"/>
<rect x="629.3" y="249.3" width="38.8" height="38.7" fill="#e9e9ee"/>
<rect x="630.2" y="250.2" width="37" height="36.9" fill="#000080"/>
<rect x="674.6" y="249.5" width="38.2" height="38.2" fill="#f29436"/>
<rect x="675.6" y="250.5" width="36.2" height="36.2" fill="#ffe9b8"/>
<rect x="676.5" y="251.4" width="34.4" height="34.4" fill="#008080"/>
<rect x="719.2" y="249.3" width="38.8" height="38.7" fill="#e9e9ee"/>
<rect x="720.1" y="250.2" width="37" height="36.9" fill="#008000"/>
<rect x="764.2" y="249.3" width="38.8" height="38.7" fill="#e9e9ee"/>
<rect x="765.1" y="250.2" width="37" height="36.9" fill="#800080"/>
<rect x="584.1" y="294.5" width="38.8" height="38.7" fill="#e9e9ee"/>
<rect x="585.0" y="295.4" width="37" height="36.9" fill="#800000"/>
<rect x="629.3" y="294.5" width="38.8" height="38.7" fill="#e9e9ee"/>
<rect x="630.2" y="295.4" width="37" height="36.9" fill="#808000"/>
<rect x="674.3" y="294.5" width="38.8" height="38.7" fill="#e9e9ee"/>
<rect x="675.2" y="295.4" width="37" height="36.9" fill="#808080"/>
<rect x="719.2" y="294.5" width="38.8" height="38.7" fill="#e9e9ee"/>
<rect x="720.1" y="295.4" width="37" height="36.9" fill="#c0c0c0"/>
<rect x="764.2" y="294.5" width="38.8" height="38.7" fill="#e9e9ee"/>
<rect x="765.1" y="295.4" width="37" height="36.9" fill="#000000"/>
<rect x="581.2" y="337.2" width="229.7" height="1" fill="#e1e1e1"/>
<rect x="581.2" y="381.8" width="229.7" height="1" fill="#e1e1e1"/>
<rect x="596.2" y="345.2" width="29.8" height="29.7" fill="#8c8c8c"/>
<rect x="597.2" y="346.2" width="27.8" height="27.7" fill="#c0c0c0"/>
<rect x="599.4" y="348.4" width="23.4" height="23.3" fill="none" stroke="#dcdcdc" stroke-width="0.9"/>
</svg>
<div id="labels2">
<span class="t" style="left:635.40px;top:352px;font-size:18.2px;line-height:18.2px;height:18.2px;letter-spacing:0.057px;color:#444;"><u>N</u>o Color</span>
<span class="t" style="left:635.40px;top:398px;font-size:18.2px;line-height:18.2px;height:18.2px;letter-spacing:0.244px;color:#a8a8a8;"><u>S</u>top Highlighting</span>
<span class="t" style="left:777.20px;top:430px;font-size:23.4px;line-height:23.4px;height:23.4px;letter-spacing:-0.400px;font-weight:700;color:#000;font-family:'DejaVu Sans', sans-serif;">Color applied</span>
</div>
<svg id="anno" width="1468" height="1020" viewBox="0 0 1468 1020" style="left:0;top:0">
<!-- long annotation arrow + cursor remnants -->
<path d="M779.6 424.9 L717.2 301.6" stroke="#000" stroke-width="4.2" fill="none"/>
<path d="M708.9 284.1 L727.3 301.9 L718.6 302.4 L713.4 308.4 L709.3 307.9 Z" fill="#000"/>
<path d="M710.2 299.6 L711.5 299.2 L711.8 305.6 L710.3 307.2 Z" fill="#fff"/>
<path d="M710.6 286.6 L726.2 301.5" stroke="#fff" stroke-width="0.7" stroke-dasharray="1 1" fill="none"/>
<path d="M719.4 301.7h7" stroke="#fff" stroke-width="0.8" fill="none"/>
<!-- short annotation arrow -->
<path d="M947.5 456.3 L950.8 454.4 L960.5 472 L963.7 466.6 L967.7 490.8 L950.2 473.6 L957 473.8 Z" fill="#000"/>
</svg>
</div>
</body>
</html>
